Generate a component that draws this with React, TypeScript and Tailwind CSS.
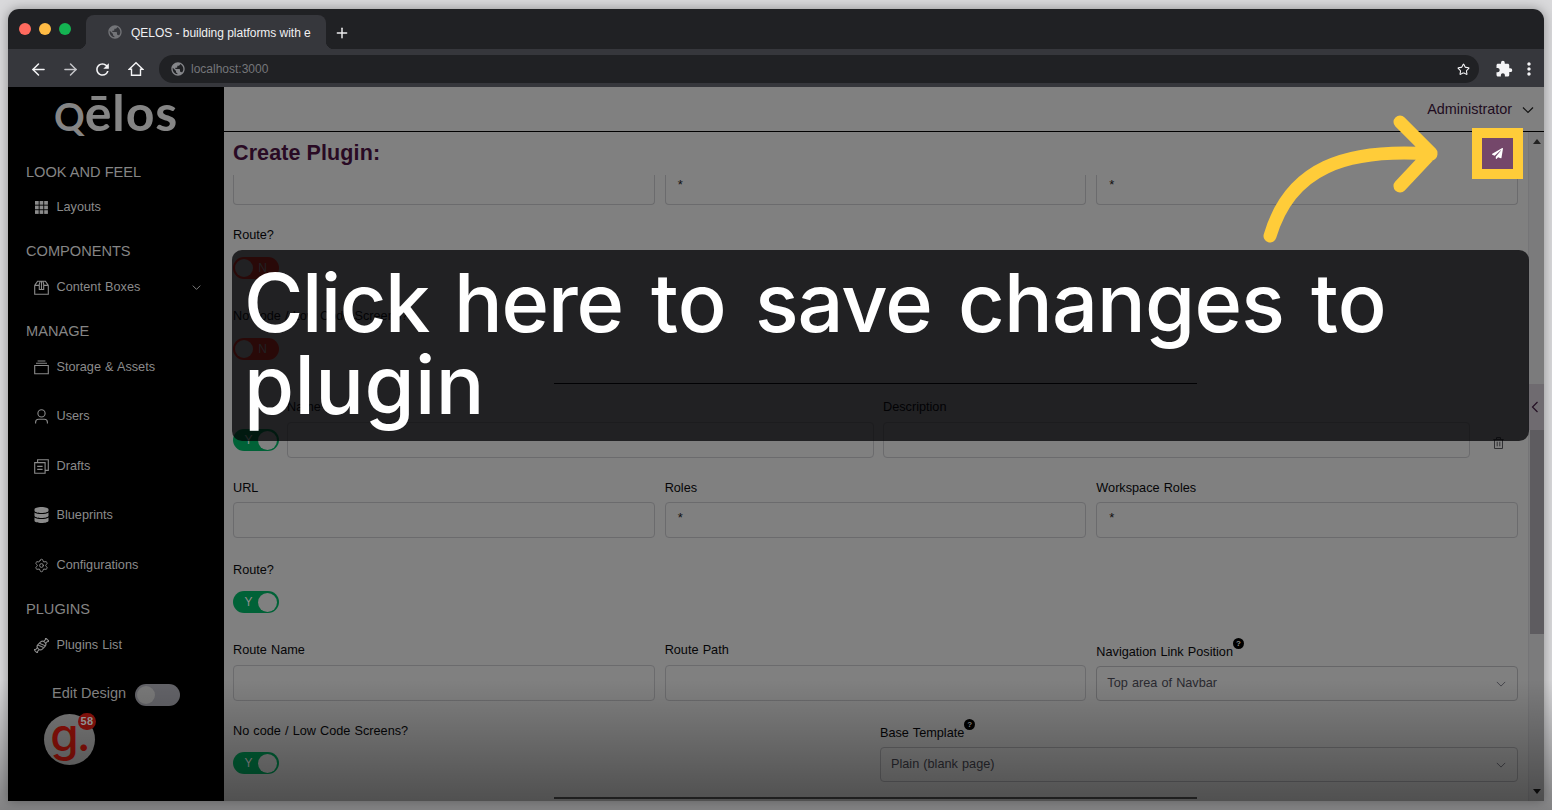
import React from "react";
import { ArrowLeft, ArrowRight, Star, Plus, Settings } from "lucide-react";
import { MdPublic, MdRefresh, MdExtension, MdMoreVert } from "react-icons/md";
import { FaDatabase, FaPaperPlane } from "react-icons/fa";

function Toggle({ on, label, className = "" }: { on?: boolean; label: string; className?: string }) {
  return (
    <div className={`flex h-[22px] w-[46px] shrink-0 items-center rounded-full text-[12px] ${on ? "bg-[#006237] text-[#8f8f8f]" : "bg-[#a02015] text-[#808080]"} ${className}`}>
      {on ? (
        <>
          <span className="ml-[11px] w-[9px] text-center">{label}</span>
          <span className="ml-[5px] h-[19px] w-[19px] rounded-full bg-[#808080]" />
        </>
      ) : (
        <>
          <span className="ml-[2px] h-[18px] w-[18px] rounded-full bg-[#808080]" />
          <span className="ml-[5px] w-[9px] text-center">{label}</span>
        </>
      )}
    </div>
  );
}

function Chevron({ size, stroke = 1.1, left, className = "" }: { size: number; stroke?: number; left?: boolean; className?: string }) {
  return (
    <svg width={size} height={size} viewBox="0 0 12 12" fill="none" stroke="currentColor" strokeWidth={stroke} className={className}>
      <path d={left ? "M8.5 1 3.5 6l5 5" : "M1 3.5 6 8.5l5-5"} />
    </svg>
  );
}

function Label({ children, help }: { children: React.ReactNode; help?: boolean }) {
  return (
    <div className="flex h-5 items-center whitespace-nowrap pt-px text-[12.7px] leading-5 text-[#050507] [word-spacing:0.6px]">
      {children}
      {help && (
        <span className="relative -top-[8px] flex h-[11px] w-[11px] items-center justify-center rounded-full bg-black text-[8px] font-bold leading-none text-[#8a8a8a]">?</span>
      )}
    </div>
  );
}

function Box({ value = "", className = "" }: { value?: string; className?: string }) {
  return <div className={`h-9 rounded border border-[#6b6b6d] px-[12px] text-[13px] leading-[30px] text-[#111] ${className}`}>{value}</div>;
}

function Select({ value }: { value: string }) {
  return (
    <div className="flex h-[35px] items-center justify-between rounded border border-[#666668] pl-[10px] pr-[11px] text-[12.7px] text-[#29292f] [word-spacing:0.6px]">
      {value}
      <Chevron size={10} className="text-[#3f3f46]" />
    </div>
  );
}

function SideHeading({ children, className }: { children: string; className: string }) {
  return <div className={`ml-[18px] h-5 whitespace-nowrap text-[14.6px] leading-5 text-[#858585] ${className}`}>{children}</div>;
}

function SideItem({ icon, label, className, arrow }: { icon: React.ReactNode; label: string; className: string; arrow?: boolean }) {
  return (
    <div className={`ml-[26px] mr-[23px] flex h-5 items-center text-[#8b8b8b] ${className}`}>
      <span className="flex w-[15px] justify-center">{icon}</span>
      <span className="ml-[7.5px] whitespace-nowrap text-[12.7px] leading-5 [word-spacing:0.6px]">{label}</span>
      {arrow && <Chevron size={9} stroke={1.2} className="ml-auto mt-px" />}
    </div>
  );
}

const line = { fill: "none", stroke: "currentColor", strokeWidth: 1.1 };

const GridIcon = () => (
  <svg width="13" height="13" viewBox="0 0 13 13" fill="currentColor">
    {[0, 4.6, 9.2].map((y) => [0, 4.6, 9.2].map((x) => <rect key={`${x}-${y}`} x={x} y={y} width="3.7" height="3.7" />))}
  </svg>
);
const BoxIcon = () => (
  <svg width="15" height="15" viewBox="0 0 15 15" {...line}>
    <path d="M.7 5.2v9h13.6v-9M.7 5.4 3.6 1.2h7.8l2.9 4.2M.7 5.4h4.6m4.4 0h4.6M5.3 9.5V4.2L6.2 1.2h2.6l.9 3v5.3zM7.5 1.2v8.3" />
  </svg>
);
const StorageIcon = () => (
  <svg width="15" height="15" viewBox="0 0 15 15" {...line}>
    <path d="M.7 5.5h13.6v8.3H.7zM2 3.2h11M3.6 1h7.8" />
  </svg>
);
const DraftIcon = () => (
  <svg width="15" height="15" viewBox="0 0 15 15" {...line}>
    <path d="M.7 3.6h10.4v10.6H.7zM3.6 3.4V.8h10.7v10.6h-3M3.2 7.4h5.4M3.2 10.4h5.4" />
  </svg>
);
const UserIcon = () => (
  <svg width="15" height="15" viewBox="0 0 15 15" {...line}>
    <circle cx="7.5" cy="4.4" r="3.6" />
    <path d="M1.6 14.4v-1.2a3 3 0 0 1 3-3h5.8a3 3 0 0 1 3 3v1.2" />
  </svg>
);
const PluginIcon = () => (
  <svg width="15" height="15" viewBox="0 0 15 15" {...line}>
    <g transform="rotate(-45 7.5 7.5)">
      <rect x="3" y="4.4" width="9" height="6.2" rx="2.6" />
      <path d="M5.2 4.6 7.6 10.4M7.6 4.5l2.4 5.8M3 6.2H.8L-.8 5v5l1.6-1.2H3M12 6.2h2.2L15.8 5v5l-1.6-1.2H12" />
    </g>
  </svg>
);
const TrashIcon = () => (
  <svg width="11" height="12" viewBox="0 0 11 12" fill="none" stroke="#303033" strokeWidth="1">
    <path d="M.3 2.5h10.4M3.5 2.5V.6h4v1.9M1.5 2.5v9h8v-9M4.2 4.7v4.6M6.8 4.7v4.6" />
  </svg>
);

function Browser() {
  return (
    <div className="shrink-0">
      <div className="flex h-10 bg-[#202124]">
        <div className="flex w-[78px] gap-2 pl-[11px] pt-[14px]">
          <span className="h-3 w-3 rounded-full bg-[#ff6a5e]" />
          <span className="h-3 w-3 rounded-full bg-[#ffbb44]" />
          <span className="h-3 w-3 rounded-full bg-[#14b352]" />
        </div>
        <div className="relative mt-[6px] flex h-[34px] w-[240px] items-center rounded-t-lg bg-[#36373c] pl-[21px]">
          <span className="absolute -left-2 bottom-0 h-2 w-2 bg-[radial-gradient(circle_at_0_0,#202124_8px,#36373c_8.5px)]" />
          <span className="absolute -right-2 bottom-0 h-2 w-2 bg-[radial-gradient(circle_at_100%_0,#202124_8px,#36373c_8.5px)]" />
          <MdPublic size={16} className="text-[#737478]" />
          <span className="ml-2 mt-px whitespace-nowrap text-[12px] tracking-[-0.03px] text-[#f0f0f2]">QELOS - building platforms with e</span>
        </div>
        <Plus size={16} strokeWidth={2.2} className="ml-2 mt-4 text-[#ececee]" />
      </div>
      <div className="flex h-[38px] items-center bg-[#36373c] pt-[2px] text-[#f4f4f6]">
        <ArrowLeft size={19} strokeWidth={1.9} className="ml-[21px]" />
        <ArrowRight size={19} strokeWidth={1.9} className="ml-[13px] text-[#c4c4c8]" />
        <MdRefresh size={19} className="ml-[13px]" />
        <svg width="16" height="16" viewBox="0 0 16 16" fill="none" stroke="currentColor" strokeWidth="1.4" className="ml-[16px]">
          <path d="M1.2 8.3 8 1.7l6.8 6.6h-2.3v6h-9v-6z" />
        </svg>
        <div className="ml-[15px] flex h-7 w-[1320px] items-center rounded-full bg-[#202124] pl-[11px] pr-[9px]">
          <MdPublic size={16} className="text-[#85868a]" />
          <span className="ml-[5px] text-[12px] text-[#75767a]">localhost:3000</span>
          <Star size={13} strokeWidth={2} className="ml-auto" />
        </div>
        <MdExtension size={18} className="ml-[16px]" />
        <MdMoreVert size={20} className="ml-[6px]" />
      </div>
    </div>
  );
}

function Sidebar() {
  return (
    <aside className="flex w-[216px] shrink-0 flex-col bg-black">
      <div className="flex h-[55px] items-baseline pl-[46px] font-['Lato',sans-serif] font-bold leading-[50px] text-[#858585]">
        <span className="text-[38px]">Q</span>
        <span className="text-[50px] tracking-[0.9px]">ēlos</span>
      </div>
      <SideHeading className="mt-[20px]">LOOK AND FEEL</SideHeading>
      <SideItem className="mt-[15px]" icon={<GridIcon />} label="Layouts" />
      <SideHeading className="mt-[24px]">COMPONENTS</SideHeading>
      <SideItem className="mt-[16px]" icon={<BoxIcon />} label="Content Boxes" arrow />
      <SideHeading className="mt-[24px]">MANAGE</SideHeading>
      <SideItem className="mt-[16px]" icon={<StorageIcon />} label="Storage & Assets" />
      <SideItem className="mt-[29px]" icon={<UserIcon />} label="Users" />
      <SideItem className="mt-[30px]" icon={<DraftIcon />} label="Drafts" />
      <SideItem className="mt-[29px]" icon={<FaDatabase size={16} />} label="Blueprints" />
      <SideItem className="mt-[30px]" icon={<Settings size={17} strokeWidth={1.6} />} label="Configurations" />
      <SideHeading className="mt-[24px]">PLUGINS</SideHeading>
      <SideItem className="mt-[16px]" icon={<PluginIcon />} label="Plugins List" />
      <div className="ml-[44px] mt-[28px] flex h-[22px] items-center text-[14.5px] text-[#858585]">
        <span className="w-[83px] whitespace-nowrap">Edit Design</span>
        <span className="mt-[2px] flex h-[22px] w-[45px] items-center rounded-full bg-[#636368] pl-[2px]">
          <span className="h-[18px] w-[18px] rounded-full bg-[#797979]" />
        </span>
      </div>
      <div className="relative ml-[36px] mt-[9px] h-[51px] w-[51px] rounded-full bg-[#7b7b7b]">
        <div className="flex h-[51px] justify-center font-['Inter',sans-serif] text-[46px] font-medium leading-[40px] tracking-[-2px] text-[#8f1109]">g.</div>
        <span className="absolute -top-[1px] left-[34px] flex h-[17px] w-[18px] items-center justify-center rounded-full bg-[#8d120c] text-[11px] font-bold tracking-[0.4px] text-[#a5a5a5]">58</span>
      </div>
    </aside>
  );
}

function Form() {
  return (
    <div className="w-[1286px] shrink-0 pl-px">
      <div className="grid grid-cols-3 gap-[10px]">
        {["", "*", "*"].map((v, i) => (
          <div key={i} className="h-[30px] rounded-b border border-t-0 border-[#6b6b6d] px-[12px] text-[13px] leading-[20px] text-[#111]">{v}</div>
        ))}
      </div>
      <div className="mt-[19px]"><Label>Route?</Label></div>
      <Toggle label="N" className="mt-[13px]" />
      <div className="mt-[26px]"><Label>No code / Low Code Screens?</Label></div>
      <Toggle label="N" className="mt-[13px]" />
      <div className="mx-auto mt-[23px] h-px w-1/2 bg-black" />
      <div className="mt-[12px] flex">
        <Toggle on label="Y" className="mt-[33px]" />
        <div className="ml-2 grid w-[1183px] grid-cols-2 gap-[9px]">
          <div><Label>Name</Label><Box className="mt-[6px]" /></div>
          <div><Label>Description</Label><Box className="mt-[6px]" /></div>
        </div>
        <div className="ml-[23px] mt-[41px]"><TrashIcon /></div>
      </div>
      <div className="mt-[19px] grid grid-cols-3 gap-[10px]">
        <div><Label>URL</Label><Box className="mt-[5px]" /></div>
        <div><Label>Roles</Label><Box value="*" className="mt-[5px]" /></div>
        <div><Label>Workspace Roles</Label><Box value="*" className="mt-[5px]" /></div>
      </div>
      <div className="mt-[21px]"><Label>Route?</Label></div>
      <Toggle on label="Y" className="mt-3" />
      <div className="mt-[26px] grid grid-cols-3 gap-[10px]">
        <div><Label>Route Name</Label><Box className="mt-[6px]" /></div>
        <div><Label>Route Path</Label><Box className="mt-[6px]" /></div>
        <div className="pt-[2px]"><Label help>Navigation Link Position</Label><div className="mt-[5px]"><Select value="Top area of Navbar" /></div></div>
      </div>
      <div className="mt-[19px] flex h-[63px]">
        <div className="w-[647px]">
          <Label>No code / Low Code Screens?</Label>
          <Toggle on label="Y" className="mt-3" />
        </div>
        <div className="w-[638px] pt-[2px]">
          <Label help>Base Template</Label>
          <div className="mt-[5px]"><Select value="Plain (blank page)" /></div>
        </div>
      </div>
      <div className="mx-auto mt-[14px] h-[2px] w-1/2 bg-[#303030]" />
    </div>
  );
}

export default function App() {
  return (
    <div className="relative h-[810px] w-[1552px] overflow-hidden bg-[#d9d9db] px-2 pt-[9px] font-['Liberation_Sans',sans-serif]">
      <div className="flex h-[792px] w-[1536px] flex-col overflow-hidden rounded-t-[11px] shadow-[0_0_12px_rgba(0,0,0,0.35)]">
        <Browser />
        <div className="flex min-h-0 flex-1">
          <Sidebar />
          <main className="flex w-[1320px] flex-col bg-[#808080]">
            <header className="flex h-[45px] shrink-0 items-center justify-end border-b border-black pr-[10px] pt-[2px] text-[14.4px] text-[#200c20]">
              Administrator
              <Chevron size={12} stroke={1.2} className="ml-[10px] text-[#111]" />
            </header>
            <div className="flex min-h-0 flex-1">
              <div className="flex w-[1304px] flex-col overflow-hidden pl-2">
                <h1 className="h-[43px] shrink-0 pl-px text-[21.5px] font-bold leading-[43px] tracking-[0.1px] text-[#290a24]">Create Plugin:</h1>
                <Form />
              </div>
              <div className="flex w-4 flex-col items-center border-l border-[#757577] bg-[#7b7b7c]">
                <span className="mt-[7px] h-0 w-0 border-x-4 border-b-[5px] border-x-transparent border-b-[#222]" />
                <div className="mt-[240px] flex h-[46px] w-full items-center justify-center bg-[#6f6b70]">
                  <Chevron left size={12} stroke={1.2} className="-ml-1 text-[#241024]" />
                </div>
                <div className="h-[204px] w-[14px] bg-[#5e5c60]" />
                <span className="mb-[7px] mt-auto h-0 w-0 border-x-4 border-t-[5px] border-x-transparent border-t-[#111]" />
              </div>
            </div>
          </main>
        </div>
      </div>

      <div className="absolute inset-x-0 bottom-0 h-[130px] bg-gradient-to-b from-transparent to-black/40" />

      <div className="absolute left-[232px] top-[250px] h-[191px] w-[1297px] rounded-[10px] bg-[rgba(2,2,4,0.75)] pl-[12px] pt-[13px] font-['Inter',sans-serif] text-[81px] font-medium leading-[81.5px] text-white">
        <div className="flex whitespace-nowrap">
          <span className="w-[210px] tracking-[-1.5px]">Click</span>
          <span className="w-[197px] tracking-[-1.2px]">here</span>
          <span className="w-[104px]">to</span>
          <span className="w-[203px] tracking-[-1px]">save</span>
          <span className="w-[353px] tracking-[-0.8px]">changes</span>
          <span>to</span>
        </div>
        <div className="tracking-[0.4px]">plugin</div>
      </div>

      <svg className="absolute left-[1255px] top-[105px]" width="195" height="145" viewBox="1255 105 195 145" fill="none" stroke="#ffcc39" strokeWidth="13" strokeLinecap="round" strokeLinejoin="round">
        <path d="M1270 236C1290 168 1345 148 1431 154M1400 122 1431 153 1400 186" />
      </svg>

      <div className="absolute left-[1472px] top-[128px] flex h-[51px] w-[51px] items-center justify-center border-[10px] border-[#ffcc39] bg-[#74476a]">
        <FaPaperPlane size={11} className="text-white" />
      </div>
    </div>
  );
}
